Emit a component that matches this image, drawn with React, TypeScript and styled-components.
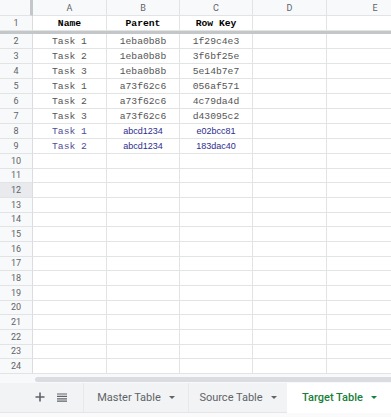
import React from "react";
import styled, { createGlobalStyle } from "styled-components";

const GlobalStyle = createGlobalStyle`
	html, body {
		margin: 0;
		padding: 0;
		background: #FFFFFF;
		overflow: hidden;
	}
	* {
		box-sizing: border-box;
	}
`;

const COLS = [74, 73, 73, 74, 97];
const LETTERS = ["A", "B", "C", "D", "E"];

const StyledSheet = styled.div`
	width: 391px;
	height: 417px;
	display: flex;
	flex-direction: column;
	font-family: Roboto, "Liberation Sans", Arial, sans-serif;
	overflow: hidden;
`;

const Row = styled.div<{ $height: number }>`
	display: flex;
	height: ${(p) => p.$height}px;
	flex-shrink: 0;
`;

const Corner = styled.div`
	width: 33px;
	flex-shrink: 0;
	background: #F8F9FA;
	border-right: 3px solid #C4C7CA;
	border-bottom: 1px solid #E2E3E3;
`;

const ColHeader = styled.div<{ $width: number }>`
	width: ${(p) => p.$width}px;
	flex-shrink: 0;
	background: #F8F9FA;
	border-right: 1px solid #E2E3E3;
	border-bottom: 1px solid #E2E3E3;
	color: #5F6368;
	font-size: 9px;
	display: flex;
	align-items: center;
	justify-content: center;
`;

const RowHeader = styled.div<{ $active?: boolean }>`
	width: 33px;
	flex-shrink: 0;
	background: ${(p) => (p.$active ? "#E8EAED" : "#F8F9FA")};
	border-right: 1px solid #DADCE0;
	border-bottom: 1px solid #E2E3E3;
	color: #5F6368;
	font-size: 9px;
	display: flex;
	align-items: center;
	justify-content: center;
`;

const Cell = styled.div<{ $width: number; $bold?: boolean; $blue?: boolean; $sans?: boolean }>`
	width: ${(p) => p.$width}px;
	flex-shrink: 0;
	border-right: 1px solid #E2E3E3;
	border-bottom: 1px solid #E2E3E3;
	display: flex;
	align-items: center;
	justify-content: center;
	white-space: pre;
	font-family: ${(p) => (p.$sans ? `"Liberation Sans", Arial, sans-serif` : `"Liberation Mono", "Courier New", monospace`)};
	font-size: ${(p) => (p.$sans ? "9px" : "9.7px")};
	font-weight: ${(p) => (p.$bold ? 700 : 400)};
	color: ${(p) => (p.$bold ? "#000000" : p.$blue ? (p.$sans ? "#2D2D8F" : "#4E4E96") : "#555555")};
`;

const FreezeBar = styled.div`
	height: 3px;
	flex-shrink: 0;
	background: #C4C7CA;
`;

const ScrollRow = styled.div`
	height: 9px;
	flex-shrink: 0;
	display: flex;
	background: #F8F9FA;
	padding-left: 35px;
	padding-top: 3px;
	padding-bottom: 1px;
`;

const Thumb = styled.div`
	flex: 1;
	background: #DADCE0;
	border-radius: 3px 0 0 3px;
`;

const TabBar = styled.div`
	height: 30px;
	flex-shrink: 0;
	display: flex;
	align-items: stretch;
	background: #F1F3F4;
	border-bottom: 1px solid #E3E5E8;
`;

const IconButton = styled.div`
	width: 22px;
	display: flex;
	align-items: center;
	justify-content: center;
	color: #5F6368;
`;

const Tools = styled.div`
	display: flex;
	padding-left: 29px;
	width: 83px;
`;

const Tab = styled.div<{ $width: number; $active?: boolean }>`
	width: ${(p) => p.$width}px;
	display: flex;
	align-items: center;
	justify-content: center;
	gap: 8px;
	font-size: 11px;
	font-weight: ${(p) => (p.$active ? 500 : 400)};
	color: ${(p) => (p.$active ? "#188038" : "#5F6368")};
	background: ${(p) => (p.$active ? "#FFFFFF" : "transparent")};
	border-left: 1px solid ${(p) => (p.$active ? "transparent" : "#E6E8EA")};
	margin-bottom: ${(p) => (p.$active ? "-1px" : "0")};
`;

const Caret = styled.span`
	width: 0;
	height: 0;
	border-left: 3px solid transparent;
	border-right: 3px solid transparent;
	border-top: 3px solid currentColor;
`;

const Footer = styled.div`
	flex: 1;
	background: #FAFAFA;
`;

type RowData = { name: string; parent: string; key: string; blue?: boolean };

const rows: RowData[] = [
	{ name: "Task 1", parent: "1eba0b8b", key: "1f29c4e3" },
	{ name: "Task 2", parent: "1eba0b8b", key: "3f6bf25e" },
	{ name: "Task 3", parent: "1eba0b8b", key: "5e14b7e7" },
	{ name: "Task 1", parent: "a73f62c6", key: "056af571" },
	{ name: "Task 2", parent: "a73f62c6", key: "4c79da4d" },
	{ name: "Task 3", parent: "a73f62c6", key: "d43095c2" },
	{ name: "Task 1", parent: "abcd1234", key: "e02bcc81", blue: true },
	{ name: "Task 2", parent: "abcd1234", key: "183dac40", blue: true },
];

const emptyRows = Array.from({ length: 15 }, (_, i) => i + 10);

export default function App() {
	return (
		<>
			<GlobalStyle />
			<StyledSheet>
				<Row $height={16}>
					<Corner />
					{LETTERS.map((l, i) => (
						<ColHeader key={l} $width={COLS[i]}>{l}</ColHeader>
					))}
				</Row>
				<Row $height={15}>
					<RowHeader>1</RowHeader>
					<Cell $width={COLS[0]} $bold>Name</Cell>
					<Cell $width={COLS[1]} $bold>Parent</Cell>
					<Cell $width={COLS[2]} $bold>Row Key</Cell>
					<Cell $width={COLS[3]} />
					<Cell $width={COLS[4]} />
				</Row>
				<FreezeBar />
				{rows.map((r, i) => (
					<Row key={i} $height={15}>
						<RowHeader>{i + 2}</RowHeader>
						<Cell $width={COLS[0]} $blue={r.blue}>{r.name}</Cell>
						<Cell $width={COLS[1]} $blue={r.blue} $sans={r.blue}>{r.parent}</Cell>
						<Cell $width={COLS[2]} $blue={r.blue} $sans={r.blue}>{r.key}</Cell>
						<Cell $width={COLS[3]} />
						<Cell $width={COLS[4]} />
					</Row>
				))}
				{emptyRows.map((n) => (
					<Row key={n} $height={14.67}>
						<RowHeader $active={n === 12}>{n}</RowHeader>
						{COLS.map((w, i) => (
							<Cell key={i} $width={w} />
						))}
					</Row>
				))}
				<ScrollRow>
					<Thumb />
				</ScrollRow>
				<TabBar>
					<Tools>
						<IconButton>
							<svg width="10" height="10" viewBox="0 0 10 10">
								<path d="M5 0.5v9M0.5 5h9" stroke="currentColor" strokeWidth="1.6" />
							</svg>
						</IconButton>
						<IconButton>
							<svg width="10" height="9" viewBox="0 0 10 9">
								<path d="M0 1h10M0 3.4h10M0 5.8h10M0 8.2h10" stroke="currentColor" strokeWidth="1.2" />
							</svg>
						</IconButton>
					</Tools>
					<Tab $width={105}>Master Table<Caret /></Tab>
					<Tab $width={99}>Source Table<Caret /></Tab>
					<Tab $width={104} $active>Target Table<Caret /></Tab>
				</TabBar>
				<Footer />
			</StyledSheet>
		</>
	);
}
